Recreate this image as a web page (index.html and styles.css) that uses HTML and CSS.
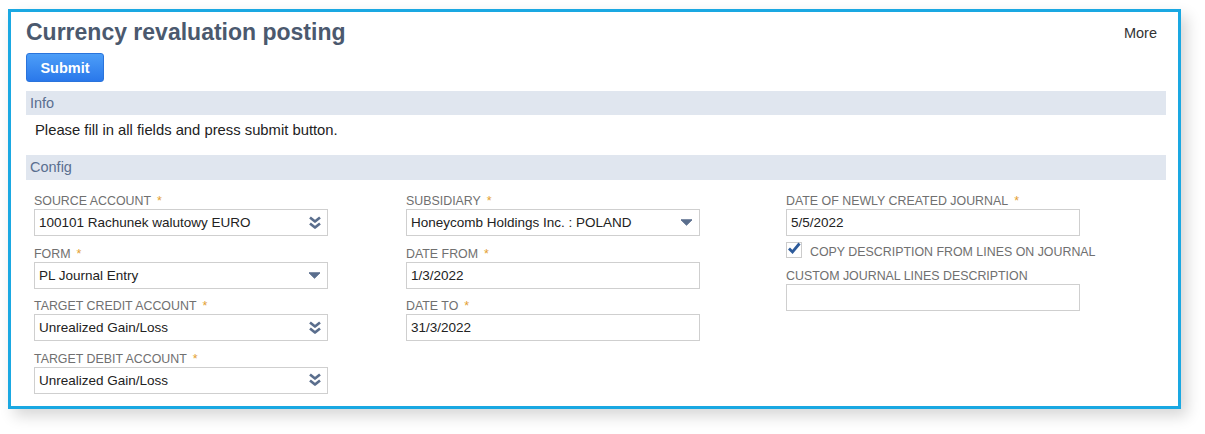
FILE: index.html
```html
<!DOCTYPE html>
<html>
<head>
<meta charset="utf-8">
<link rel="stylesheet" href="styles.css">
</head>
<body>
<div class="frame">
  <div class="head">
    <h1 class="title">Currency revaluation posting</h1>
    <span class="more">More</span>
  </div>
  <button class="submit">Submit</button>
  <div class="bar">Info</div>
  <p class="info">Please fill in all fields and press submit button.</p>
  <div class="bar">Config</div>
  <div class="fields">
    <div class="col">
      <div class="field">
        <div class="label">SOURCE ACCOUNT<span class="req">*</span></div>
        <div class="input"><span>100101 Rachunek walutowy EURO</span>
          <svg class="chev" width="14" height="14" viewBox="0 0 14 14"><path d="M2 1.5 L7 5.5 L12 1.5 M2 7.5 L7 11.5 L12 7.5" fill="none" stroke="#5a6e8d" stroke-width="2.7" stroke-linejoin="round"/></svg>
        </div>
      </div>
      <div class="field">
        <div class="label">FORM<span class="req">*</span></div>
        <div class="input"><span>PL Journal Entry</span>
          <svg class="tri" width="13" height="7" viewBox="0 0 13 7"><path d="M1 0.8 L12 0.8 L6.5 6.2 Z" fill="#5a6e8d" stroke="#5a6e8d" stroke-width="1" stroke-linejoin="round"/></svg>
        </div>
      </div>
      <div class="field">
        <div class="label">TARGET CREDIT ACCOUNT<span class="req">*</span></div>
        <div class="input"><span>Unrealized Gain/Loss</span>
          <svg class="chev" width="14" height="14" viewBox="0 0 14 14"><path d="M2 1.5 L7 5.5 L12 1.5 M2 7.5 L7 11.5 L12 7.5" fill="none" stroke="#5a6e8d" stroke-width="2.7" stroke-linejoin="round"/></svg>
        </div>
      </div>
      <div class="field">
        <div class="label">TARGET DEBIT ACCOUNT<span class="req">*</span></div>
        <div class="input"><span>Unrealized Gain/Loss</span>
          <svg class="chev" width="14" height="14" viewBox="0 0 14 14"><path d="M2 1.5 L7 5.5 L12 1.5 M2 7.5 L7 11.5 L12 7.5" fill="none" stroke="#5a6e8d" stroke-width="2.7" stroke-linejoin="round"/></svg>
        </div>
      </div>
    </div>
    <div class="col">
      <div class="field">
        <div class="label">SUBSIDIARY<span class="req">*</span></div>
        <div class="input"><span>Honeycomb Holdings Inc. : POLAND</span>
          <svg class="tri" width="13" height="7" viewBox="0 0 13 7"><path d="M1 0.8 L12 0.8 L6.5 6.2 Z" fill="#5a6e8d" stroke="#5a6e8d" stroke-width="1" stroke-linejoin="round"/></svg>
        </div>
      </div>
      <div class="field">
        <div class="label">DATE FROM<span class="req">*</span></div>
        <div class="input"><span>1/3/2022</span></div>
      </div>
      <div class="field">
        <div class="label">DATE TO<span class="req">*</span></div>
        <div class="input"><span>31/3/2022</span></div>
      </div>
    </div>
    <div class="col">
      <div class="field tight">
        <div class="label">DATE OF NEWLY CREATED JOURNAL<span class="req">*</span></div>
        <div class="input"><span>5/5/2022</span></div>
      </div>
      <div class="check-row">
        <span class="checkbox">
          <svg width="16" height="16" viewBox="0 0 16 16"><path d="M3 7.5 L6.5 11 L13.5 2.5" fill="none" stroke="#2d5b9b" stroke-width="2.8" stroke-linejoin="miter"/></svg>
        </span>
        <span class="check-label">COPY DESCRIPTION FROM LINES ON JOURNAL</span>
      </div>
      <div class="field custom">
        <div class="label">CUSTOM JOURNAL LINES DESCRIPTION</div>
        <div class="input"></div>
      </div>
    </div>
  </div>
</div>
</body>
</html>
```

FILE: styles.css
```css
html, body {
  margin: 0;
  padding: 0;
  background: #ffffff;
}

body {
  font-family: "Liberation Sans", Arial, sans-serif;
  color: #222222;
  width: 1205px;
  height: 434px;
  overflow: hidden;
}

.frame {
  box-sizing: border-box;
  margin: 9px 0 0 8px;
  width: 1173px;
  height: 400px;
  border: 3px solid #1aa8e2;
  padding: 7px 12px 0 15px;
  background: #ffffff;
  box-shadow: 6px 7px 14px rgba(0, 0, 0, 0.16);
}

.head {
  display: flex;
  justify-content: space-between;
  align-items: flex-start;
}

.title {
  margin: 0;
  font-size: 23px;
  line-height: 26px;
  font-weight: bold;
  color: #4b596e;
}

.more {
  margin-top: 6px;
  margin-right: 9px;
  font-size: 14.5px;
  line-height: 17px;
  color: #333333;
}

.submit {
  display: block;
  box-sizing: border-box;
  margin-top: 8px;
  width: 78px;
  height: 29px;
  padding: 0;
  border: 1px solid #2a74dc;
  border-radius: 3px;
  background: linear-gradient(#4d9ef8, #2a78ea);
  color: #ffffff;
  font-family: "Liberation Sans", Arial, sans-serif;
  font-size: 14.5px;
  font-weight: bold;
}

.bar {
  box-sizing: border-box;
  height: 24px;
  margin-top: 9px;
  padding-left: 4px;
  background: #e0e6ef;
  color: #5a6f8f;
  font-size: 14.5px;
  line-height: 24px;
}

.info {
  margin: 6px 0 16px 9px;
  font-size: 14.8px;
  line-height: 18px;
  color: #222222;
}

.info + .bar {
  margin-top: 0;
  height: 25px;
  line-height: 25px;
}

.fields {
  display: grid;
  grid-template-columns: 372px 380px 1fr;
  padding: 13px 0 0 8px;
}

.field {
  margin-bottom: 9.5px;
}

.field.tight {
  margin-bottom: 0;
}

.field.custom {
  margin-top: 6px;
}

.label {
  font-size: 12.4px;
  line-height: 16px;
  color: #707070;
  white-space: nowrap;
}

.req {
  color: #e3a033;
  margin-left: 6px;
}

.input {
  box-sizing: border-box;
  width: 294px;
  height: 27px;
  border: 1px solid #cfcfcf;
  padding: 0 5px 0 4px;
  display: flex;
  align-items: center;
  justify-content: space-between;
  font-size: 13.5px;
  color: #222222;
  white-space: nowrap;
}

.chev {
  display: block;
}

.tri {
  display: block;
  margin-right: 1px;
}

.check-row {
  display: flex;
  align-items: flex-start;
  margin-top: 6px;
  height: 20px;
}

.checkbox {
  box-sizing: border-box;
  width: 16px;
  height: 16px;
  border: 1px solid #cccccc;
  position: relative;
  background: #ffffff;
}

.checkbox svg {
  position: absolute;
  left: -1px;
  top: -2px;
}

.check-label {
  margin-left: 8px;
  font-size: 12.4px;
  line-height: 20px;
  color: #707070;
  white-space: nowrap;
}
```
